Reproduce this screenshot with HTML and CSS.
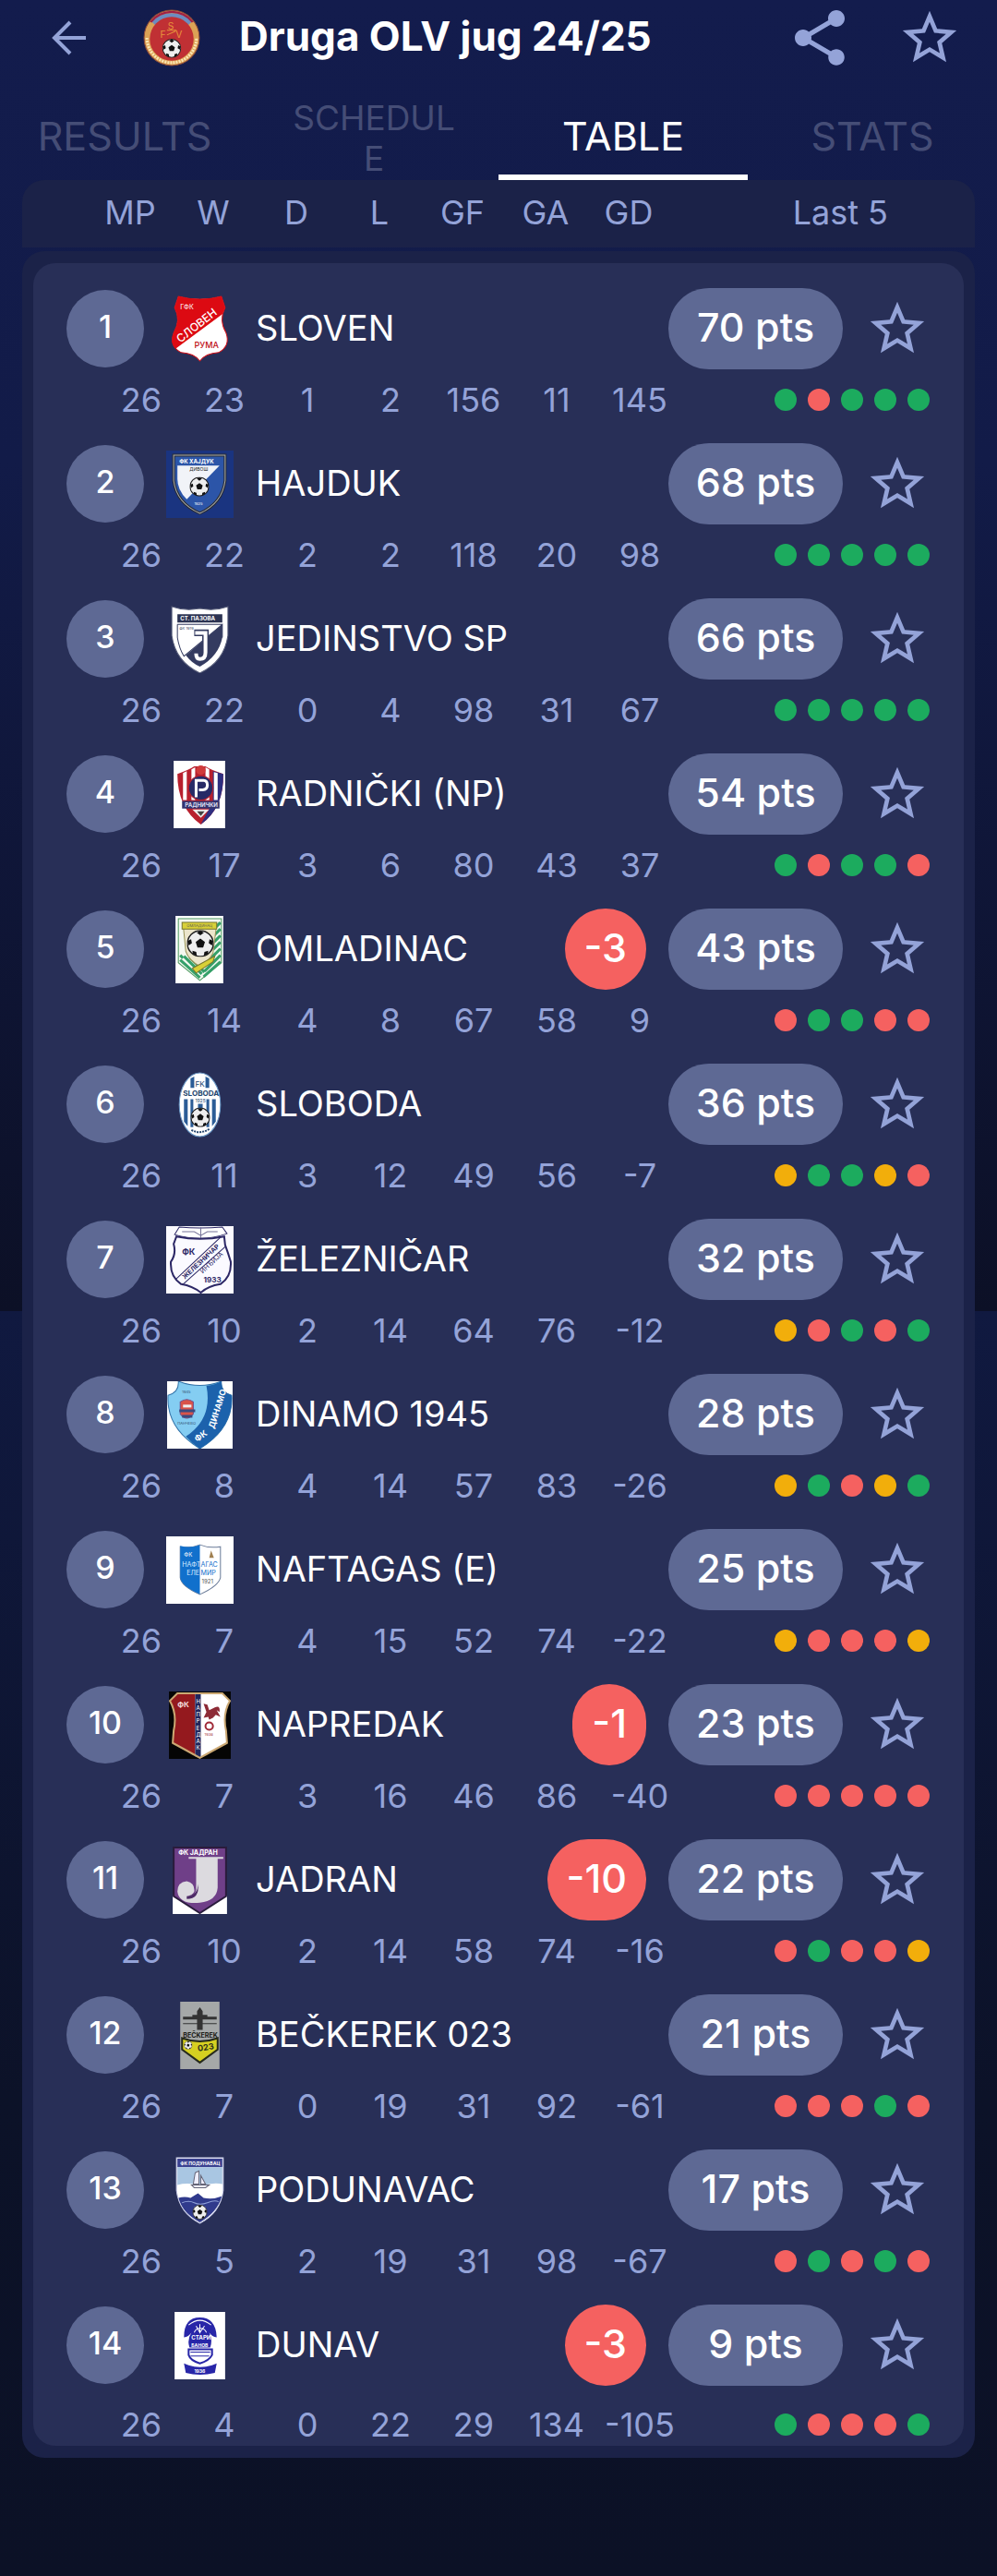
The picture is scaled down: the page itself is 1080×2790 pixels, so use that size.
FILE: index.html
```html
<!DOCTYPE html>
<html lang="en">
<head>
    <meta charset="UTF-8">
    <meta name="viewport" content="width=device-width, initial-scale=1.0">
    <title>Druga OLV jug 24/25 - Table</title>
    <link rel="stylesheet" href="styles.css">
</head>
<body>
    <!-- shared icons -->
    <svg class="sprite" aria-hidden="true">
        <symbol id="star" viewBox="0 0 24 24">
            <path d="M22 9.24l-7.19-.62L12 2 9.19 8.63 2 9.24l5.46 4.73L5.82 21 12 17.27 18.18 21l-1.63-7.03L22 9.24zM12 15.4l-3.76 2.27 1-4.28-3.32-2.88 4.38-.38L12 6.1l1.71 4.04 4.38.38-3.32 2.88 1 4.28L12 15.4z"/>
        </symbol>
        <symbol id="ball" viewBox="0 0 20 20">
            <circle cx="10" cy="10" r="9.5" fill="#eee" stroke="#222" stroke-width="1"/>
            <path fill="#111" d="M10 6.4l3.4 2.5-1.3 4H7.9l-1.3-4zM10 .5l2.6 1.6L10 4 7.4 2.1zM19.3 8l-.7 3.4-2.4-1.6.6-3zM.7 8l.7 3.4 2.4-1.6-.6-3zM15.6 17.5l-3 1.6.4-2.9 2.8-.9zM4.4 17.5l3 1.6-.4-2.9-2.8-.9z"/>
        </symbol>
    </svg>

    <header>
        <button class="back" aria-label="Back">
            <svg viewBox="0 0 40 40"><path d="M38 20H4M21 3L4 20l17 17" fill="none" stroke="#94a3d8" stroke-width="4"/></svg>
        </button>
        <svg class="league-logo" viewBox="0 0 60 60">
            <circle cx="30" cy="30" r="29" fill="#dca255" stroke="#8d4a3a" stroke-width="1"/>
            <path d="M9 13A29 29 0 0 1 51 13L47 17A24 24 0 0 0 13 17Z" fill="#6c8cc0"/>
            <path d="M7 13A29 29 0 0 1 53 13L51 14A27 27 0 0 0 9 14Z" fill="#a02045"/>
            <path d="M13 18A23 23 0 0 1 47 18L44 21A20 20 0 0 0 16 21Z" fill="#fff"/>
            <circle cx="30" cy="31" r="23" fill="#c03034"/>
            <path d="M4 30A26 26 0 0 0 56 30" fill="none" stroke="#fbe6b4" stroke-width="3" stroke-dasharray="2 1"/>
            <text x="18" y="30" font-size="10" fill="#e8953c">F</text>
            <text x="26" y="21" font-size="10" fill="#e8953c">S</text>
            <text x="34" y="30" font-size="10" fill="#e8953c">V</text>
            <path d="M25 22H35M25 27L34 23" stroke="#e8953c" stroke-width="1"/>
            <use href="#ball" x="20" y="31" width="20" height="20"/>
        </svg>
        <h1>Druga OLV jug 24/25</h1>
        <button class="share" aria-label="Share">
            <svg viewBox="0 0 24 24"><path d="M18 16.08c-.76 0-1.44.3-1.96.77L8.91 12.7c.05-.23.09-.46.09-.7s-.04-.47-.09-.7l7.05-4.11c.54.5 1.25.81 2.04.81 1.66 0 3-1.34 3-3s-1.34-3-3-3-3 1.34-3 3c0 .24.04.47.09.7L8.04 9.81C7.5 9.31 6.79 9 6 9c-1.66 0-3 1.34-3 3s1.34 3 3 3c.79 0 1.5-.31 2.04-.81l7.12 4.16c-.05.21-.08.43-.08.65 0 1.61 1.31 2.92 2.92 2.92s2.92-1.31 2.92-2.92-1.31-2.92-2.92-2.92z"/></svg>
        </button>
        <button class="fav" aria-label="Follow league"><svg><use href="#star"/></svg></button>
    </header>

    <nav>
        <a href="#results">RESULTS</a>
        <a href="#schedule" class="long">SCHEDULE</a>
        <a href="#table" class="active">TABLE</a>
        <a href="#stats">STATS</a>
    </nav>

    <table>
        <thead>
            <tr>
                <th class="team-head">Team</th>
                <th>MP</th><th>W</th><th>D</th><th>L</th><th>GF</th><th>GA</th><th>GD</th>
                <th class="last">Last 5</th>
            </tr>
        </thead>
        <tbody>
            <tr>
                <th class="team" scope="row">
                    <span class="rank">1</span>
                    <svg class="crest" viewBox="0 0 72 72">
                        <path d="M13 1Q36 7 59 1L63 13Q56 26 64 40Q69 54 56 61Q42 62 36 70Q30 62 16 61Q3 54 8 40Q16 26 9 13Z" fill="#fff" stroke="#d01018" stroke-width="1"/>
                        <path d="M13 1Q36 7 59 1L63 13L60 20L10 57Q3 50 8 40Q16 26 9 13Z" fill="#dc0a12"/>
                        <text x="15" y="15" font-size="7" fill="#fff">ГФК</text>
                        <text x="15" y="51" font-size="12" font-weight="500" fill="#fff" transform="rotate(-38 15 51)">СЛОВЕН</text>
                        <text x="30" y="56" font-size="9" font-weight="500" fill="#c01018">РУМА</text>
                    </svg>
                    <span class="name">SLOVEN</span>
                    <span class="points">70 pts</span>
                    <button class="fav" aria-label="Follow SLOVEN"><svg><use href="#star"/></svg></button>
                </th>
                <td>26</td><td>23</td><td>1</td><td>2</td><td>156</td><td>11</td><td>145</td>
                <td class="form"><i class="win"></i><i class="loss"></i><i class="win"></i><i class="win"></i><i class="win"></i></td>
            </tr>
            <tr>
                <th class="team" scope="row">
                    <span class="rank">2</span>
                    <svg class="crest" viewBox="0 0 72 72">
                        <rect width="72" height="72" fill="#1a3480"/>
                        <path d="M8 5H63V32Q60 56 36 67Q11 56 8 32Z" fill="#2c55a8" stroke="#2a2c30" stroke-width="3"/>
                        <path d="M8 5H63V32Q60 56 36 67Q11 56 8 32Z" fill="none" stroke="#a9adb3" stroke-width="1"/>
                        <path d="M12 16H57L22 52Q12 42 12 30Z" fill="#f1f3f8"/>
                        <text x="14" y="14" font-size="6" font-weight="bold" fill="#fff">ФК ХАЈДУК</text>
                        <text x="25" y="22" font-size="5" fill="#222">ДИВОШ</text>
                        <use href="#ball" x="25" y="28" width="21" height="21"/>
                        <text x="30" y="58" font-size="4" fill="#fff">1925</text>
                    </svg>
                    <span class="name">HAJDUK</span>
                    <span class="points">68 pts</span>
                    <button class="fav" aria-label="Follow HAJDUK"><svg><use href="#star"/></svg></button>
                </th>
                <td>26</td><td>22</td><td>2</td><td>2</td><td>118</td><td>20</td><td>98</td>
                <td class="form"><i class="win"></i><i class="win"></i><i class="win"></i><i class="win"></i><i class="win"></i></td>
            </tr>
            <tr>
                <th class="team" scope="row">
                    <span class="rank">3</span>
                    <svg class="crest" viewBox="0 0 72 72">
                        <path d="M6 1Q20 6 36 3Q52 6 66 1V32Q62 60 36 72Q10 60 6 32Z" fill="#fff" stroke="#555b78" stroke-width="1"/>
                        <path d="M12 9H60V18H12Z" fill="#2c3352"/>
                        <path d="M60 20V34Q56 54 36 65Q28 62 21 53Z" fill="#343b60"/>
                        <path d="M12 20H60M12 20V34Q14 46 19 54L60 20V34" fill="none" stroke="#343b60" stroke-width="1"/>
                        <text x="15" y="16" font-size="6" font-weight="bold" fill="#fff">СТ. ПАЗОВА</text>
                        <text x="14" y="26" font-size="4" fill="#343b60">ФК 1919</text>
                        <path d="M30 29H42V50Q42 57 36 57Q32 57 32 51" fill="none" stroke="#343b60" stroke-width="7"/>
                        <path d="M31 29H42V50Q42 57 36 57Q32 57 32 51" fill="none" stroke="#fff" stroke-width="4"/>
                    </svg>
                    <span class="name">JEDINSTVO SP</span>
                    <span class="points">66 pts</span>
                    <button class="fav" aria-label="Follow JEDINSTVO SP"><svg><use href="#star"/></svg></button>
                </th>
                <td>26</td><td>22</td><td>0</td><td>4</td><td>98</td><td>31</td><td>67</td>
                <td class="form"><i class="win"></i><i class="win"></i><i class="win"></i><i class="win"></i><i class="win"></i></td>
            </tr>
            <tr>
                <th class="team" scope="row">
                    <span class="rank">4</span>
                    <svg class="crest" viewBox="0 0 72 72">
                        <rect x="8" width="55" height="72" fill="#fff"/>
                        <path d="M12 14Q24 10 30 6H42Q48 10 61 14Q62 50 37 68Q12 50 12 14Z" fill="#b8202e"/>
                        <path d="M61 14Q62 50 37 68L50 44V11Z" fill="#2e2f80"/>
                        <path d="M18 13V42H22V11ZM27 9V42H31V7ZM42 7V42H46V9ZM51 12V42H55V13Z" fill="#fff"/>
                        <circle cx="37" cy="29" r="13" fill="#272a66" stroke="#b8202e" stroke-width="1"/>
                        <circle cx="37" cy="10" r="5" fill="#d03a3a"/>
                        <path d="M32 39V21H40Q44 21 44 26T39 31H35" fill="none" stroke="#fff" stroke-width="3"/>
                        <rect x="17" y="43" width="40" height="8" fill="#34346e"/>
                        <text x="20" y="49" font-size="6" font-weight="bold" fill="#dde">РАДНИЧКИ</text>
                        <path d="M28 52H46L37 61Z" fill="#eee"/>
                        <path d="M33 54H41L37 59Z" fill="#444"/>
                    </svg>
                    <span class="name">RADNIČKI (NP)</span>
                    <span class="points">54 pts</span>
                    <button class="fav" aria-label="Follow RADNIČKI (NP)"><svg><use href="#star"/></svg></button>
                </th>
                <td>26</td><td>17</td><td>3</td><td>6</td><td>80</td><td>43</td><td>37</td>
                <td class="form"><i class="win"></i><i class="loss"></i><i class="win"></i><i class="win"></i><i class="loss"></i></td>
            </tr>
            <tr>
                <th class="team" scope="row">
                    <span class="rank">5</span>
                    <svg class="crest" viewBox="0 0 72 72">
                        <rect x="10" width="51" height="72" fill="#fff"/>
                        <path d="M13 3H59V50L36 69L13 50Z" fill="#f4f8f0" stroke="#4d9a60" stroke-width="1"/>
                        <path d="M58 7L52 13M58 14L51 21M58 21L51 28M58 28L50 36M58 35L47 46M58 42L41 59M58 49L40 65M15 42L18 45M15 47L36 66M19 43L38 62M25 44L41 60" stroke="#35a06a" stroke-width="3"/>
                        <path d="M18 8H54L50 40Q46 48 36 54Q24 47 21 38Z" fill="#ece6cc" stroke="#9a9458" stroke-width="1"/>
                        <path d="M17 7H54V14H17ZM28 56L52 43L50 49L32 61Z" fill="#d8d038" stroke="#77742c" stroke-width="1"/>
                        <text x="22" y="12" font-size="4" fill="#555">ОМЛАДИНАЦ</text>
                        <use href="#ball" x="22" y="15" width="29" height="29"/>
                    </svg>
                    <span class="name">OMLADINAC</span>
                    <span class="deduction">-3</span>
                    <span class="points">43 pts</span>
                    <button class="fav" aria-label="Follow OMLADINAC"><svg><use href="#star"/></svg></button>
                </th>
                <td>26</td><td>14</td><td>4</td><td>8</td><td>67</td><td>58</td><td>9</td>
                <td class="form"><i class="loss"></i><i class="win"></i><i class="win"></i><i class="loss"></i><i class="loss"></i></td>
            </tr>
            <tr>
                <th class="team" scope="row">
                    <span class="rank">6</span>
                    <svg class="crest" viewBox="0 0 72 72">
                        <ellipse cx="36" cy="36" rx="22" ry="34" fill="#fff" stroke="#6c9ac8" stroke-width="1"/>
                        <path d="M26 8V18H30V6ZM42 6V18H46V8ZM19 30V54L23 59V30ZM26 30V60H29V30ZM43 30V60H46V30ZM49 30V59L53 54V30ZM34 35H39V42H34Z" fill="#2b5c96"/>
                        <text x="31" y="17" font-size="8" fill="#24466e">FK</text>
                        <text x="18" y="27" font-size="8" font-weight="bold" fill="#24466e">SLOBODA</text>
                        <text x="31" y="34" font-size="5" fill="#24466e">1925</text>
                        <use href="#ball" x="26" y="39" width="21" height="21"/>
                        <path d="M27 63Q36 68 46 62" fill="none" stroke="#24466e" stroke-width="2" stroke-dasharray="2 1"/>
                    </svg>
                    <span class="name">SLOBODA</span>
                    <span class="points">36 pts</span>
                    <button class="fav" aria-label="Follow SLOBODA"><svg><use href="#star"/></svg></button>
                </th>
                <td>26</td><td>11</td><td>3</td><td>12</td><td>49</td><td>56</td><td>-7</td>
                <td class="form"><i class="draw"></i><i class="win"></i><i class="win"></i><i class="draw"></i><i class="loss"></i></td>
            </tr>
            <tr>
                <th class="team" scope="row">
                    <span class="rank">7</span>
                    <svg class="crest" viewBox="0 0 72 72">
                        <rect width="72" height="72" fill="#fbfaff"/>
                        <path d="M14 1Q36 3 60 1L65 8Q50 13 37 13Q22 13 9 9Z" fill="#fff" stroke="#2d2866" stroke-width="1"/>
                        <path d="M17 6H30L37 10L44 6H55M37 1V13" fill="none" stroke="#77749a" stroke-width="1"/>
                        <path d="M11 11Q36 16 62 11L63 20Q66 28 69 38Q70 54 58 62Q45 64 37 71Q28 64 16 62Q4 54 5 38Q11 30 8 19Z" fill="none" stroke="#2d2866" stroke-width="2"/>
                        <path d="M10 57L58 12M17 63L63 22" stroke="#2d2866" stroke-width="1"/>
                        <text x="17" y="31" font-size="9" font-weight="bold" fill="#2d2866">ФК</text>
                        <text x="20" y="57" font-size="7" font-weight="bold" fill="#2d2866" transform="rotate(-43 20 57)">ЖЕЛЕЗНИЧАР</text>
                        <text x="39" y="51" font-size="7" fill="#2d2866" transform="rotate(-43 39 51)">ИНЂИЈА</text>
                        <text x="40" y="60" font-size="8" font-weight="bold" fill="#2d2866">1933</text>
                    </svg>
                    <span class="name">ŽELEZNIČAR</span>
                    <span class="points">32 pts</span>
                    <button class="fav" aria-label="Follow ŽELEZNIČAR"><svg><use href="#star"/></svg></button>
                </th>
                <td>26</td><td>10</td><td>2</td><td>14</td><td>64</td><td>76</td><td>-12</td>
                <td class="form"><i class="draw"></i><i class="loss"></i><i class="win"></i><i class="loss"></i><i class="win"></i></td>
            </tr>
            <tr>
                <th class="team" scope="row">
                    <span class="rank">8</span>
                    <svg class="crest" viewBox="0 0 72 72">
                        <rect x="1" width="70" height="72" fill="#fff"/>
                        <path d="M13 0Q14 12 2 15Q0 50 36 72Q72 50 70 15Q58 12 59 0Q36 9 13 0Z" fill="#84cdf2" stroke="#3272a8" stroke-width="1"/>
                        <path d="M43 5Q52 4 59 0Q58 12 70 15Q72 50 36 72Q28 67 21 59Q50 40 43 5Z" fill="#1c62ac"/>
                        <path d="M15 22Q22 17 29 22V35Q22 44 15 35Z" fill="#d9534a" stroke="#74508a" stroke-width="1"/>
                        <path d="M14 30H31V33H14ZM17 36H28V39H17Z" fill="#3a4a80"/>
                        <path d="M18 25H27V28H18Z" fill="#eee"/>
                        <text x="17" y="13" font-size="4" fill="#34506e">1945</text>
                        <text x="12" y="46" font-size="4" fill="#34506e">ПАНЧЕВО</text>
                        <text x="33" y="65" font-size="9" font-weight="bold" fill="#fff" transform="rotate(-35 33 65)">ФК</text>
                        <text x="51" y="51" font-size="9" font-weight="bold" fill="#fff" transform="rotate(-72 51 51)">ДИНАМО</text>
                    </svg>
                    <span class="name">DINAMO 1945</span>
                    <span class="points">28 pts</span>
                    <button class="fav" aria-label="Follow DINAMO 1945"><svg><use href="#star"/></svg></button>
                </th>
                <td>26</td><td>8</td><td>4</td><td>14</td><td>57</td><td>83</td><td>-26</td>
                <td class="form"><i class="draw"></i><i class="win"></i><i class="loss"></i><i class="draw"></i><i class="win"></i></td>
            </tr>
            <tr>
                <th class="team" scope="row">
                    <span class="rank">9</span>
                    <svg class="crest" viewBox="0 0 72 72">
                        <rect width="72" height="72" fill="#fff"/>
                        <path d="M15 11Q26 13 36 9Q46 13 58 11V44Q56 53 36 62Q16 53 15 44Z" fill="#fff" stroke="#6b7c99" stroke-width="1"/>
                        <path d="M15 10Q26 13 36 9V62Q16 53 15 44Z" fill="#1170cc"/>
                        <text x="19" y="22" font-size="6" fill="#fff">ФК</text>
                        <path d="M48 15L51 23H46Z" fill="#a08050"/>
                        <text x="17" y="33" font-size="7" fill="#d6eaff">НАФТ</text>
                        <text x="37" y="33" font-size="7" fill="#1170cc">АГАС</text>
                        <text x="22" y="41" font-size="7" fill="#d6eaff">ЕЛЕ</text>
                        <text x="37" y="41" font-size="7" fill="#1170cc">МИР</text>
                        <text x="38" y="50" font-size="6" fill="#555">1921</text>
                    </svg>
                    <span class="name">NAFTAGAS (E)</span>
                    <span class="points">25 pts</span>
                    <button class="fav" aria-label="Follow NAFTAGAS (E)"><svg><use href="#star"/></svg></button>
                </th>
                <td>26</td><td>7</td><td>4</td><td>15</td><td>52</td><td>74</td><td>-22</td>
                <td class="form"><i class="draw"></i><i class="loss"></i><i class="loss"></i><i class="loss"></i><i class="draw"></i></td>
            </tr>
            <tr>
                <th class="team" scope="row">
                    <span class="rank">10</span>
                    <svg class="crest" viewBox="0 0 72 72">
                        <rect x="3" width="66" height="72" fill="#050505"/>
                        <path d="M12 2H60L68 10Q60 24 64 42L65 55Q52 62 36 71Q20 62 7 55L8 42Q12 24 4 10Z" fill="#fff"/>
                        <path d="M12 2H31V68L7 55L8 42Q12 24 4 10Z" fill="#94191e"/>
                        <rect x="31" y="2" width="6" height="68" fill="#20275e"/>
                        <path d="M12 2H60L68 10Q60 24 64 42L65 55Q52 62 36 71Q20 62 7 55L8 42Q12 24 4 10Z" fill="none" stroke="#cba873" stroke-width="2"/>
                        <text x="12" y="17" font-size="8" font-weight="bold" fill="#f0dada">ФК</text>
                        <text font-size="6" fill="#fff"><tspan x="32" y="13">Н</tspan><tspan x="32" y="20">А</tspan><tspan x="32" y="27">П</tspan><tspan x="32" y="34">Р</tspan><tspan x="32" y="41">Е</tspan><tspan x="32" y="48">Д</tspan><tspan x="32" y="55">А</tspan><tspan x="32" y="62">К</tspan></text>
                        <path d="M40 13L44 14L46 20L52 17Q58 14 57 22L54 20L58 27L53 25L50 28L46 30L45 27L40 28L43 22Z" fill="#8d2b36"/>
                        <circle cx="46" cy="37" r="4" fill="none" stroke="#a02a38" stroke-width="2"/>
                        <text x="41" y="47" font-size="4" fill="#a02a38">1938</text>
                    </svg>
                    <span class="name">NAPREDAK</span>
                    <span class="deduction">-1</span>
                    <span class="points">23 pts</span>
                    <button class="fav" aria-label="Follow NAPREDAK"><svg><use href="#star"/></svg></button>
                </th>
                <td>26</td><td>7</td><td>3</td><td>16</td><td>46</td><td>86</td><td>-40</td>
                <td class="form"><i class="loss"></i><i class="loss"></i><i class="loss"></i><i class="loss"></i><i class="loss"></i></td>
            </tr>
            <tr>
                <th class="team" scope="row">
                    <span class="rank">11</span>
                    <svg class="crest" viewBox="0 0 72 72">
                        <rect x="7" y="52" width="58" height="20" fill="#fff"/>
                        <path d="M8 1H64V53L36 71L8 53Z" fill="#6f3f88" stroke="#2a1c3c" stroke-width="2"/>
                        <text x="13" y="9" font-size="7" font-weight="bold" fill="#fff">ФК ЈАДРАН</text>
                        <path d="M24 11H61V13H55V44Q54 58 36 60Q14 62 12 48Q12 38 22 37Q31 39 30 48Q28 52 24 52Q31 53 32 46V13H24Z" fill="#dcdadf"/>
                        <path d="M22 53Q34 52 34 40Q36 56 22 56Z" fill="#4d2a66"/>
                    </svg>
                    <span class="name">JADRAN</span>
                    <span class="deduction">-10</span>
                    <span class="points">22 pts</span>
                    <button class="fav" aria-label="Follow JADRAN"><svg><use href="#star"/></svg></button>
                </th>
                <td>26</td><td>10</td><td>2</td><td>14</td><td>58</td><td>74</td><td>-16</td>
                <td class="form"><i class="loss"></i><i class="win"></i><i class="loss"></i><i class="loss"></i><i class="draw"></i></td>
            </tr>
            <tr>
                <th class="team" scope="row">
                    <span class="rank">12</span>
                    <svg class="crest" viewBox="0 0 72 72">
                        <rect x="15" width="42" height="72" fill="#a5a8a8"/>
                        <path d="M17 39Q36 46 55 39V51L36 65L17 51Z" fill="#d6d021" stroke="#262a1c" stroke-width="2"/>
                        <path d="M18 16H54V19H18ZM18 23H54V24H18ZM33 10L36 6L39 10V30H33ZM28 14H44V16H28Z" fill="#333"/>
                        <text x="18" y="38" font-size="7" font-weight="bold" fill="#1d2018">BEČKEREK</text>
                        <use href="#ball" x="19" y="42" width="9" height="9"/>
                        <text x="34" y="53" font-size="9" font-weight="bold" fill="#30321c" transform="rotate(-8 34 53)">023</text>
                    </svg>
                    <span class="name">BEČKEREK 023</span>
                    <span class="points">21 pts</span>
                    <button class="fav" aria-label="Follow BEČKEREK 023"><svg><use href="#star"/></svg></button>
                </th>
                <td>26</td><td>7</td><td>0</td><td>19</td><td>31</td><td>92</td><td>-61</td>
                <td class="form"><i class="loss"></i><i class="loss"></i><i class="loss"></i><i class="win"></i><i class="loss"></i></td>
            </tr>
            <tr>
                <th class="team" scope="row">
                    <span class="rank">13</span>
                    <svg class="crest" viewBox="0 0 72 72">
                        <path d="M11 1H61V36Q58 60 36 71Q14 60 11 36Z" fill="#fff"/>
                        <path d="M12 2H60V11H12Z" fill="#3a4190"/>
                        <path d="M12 11H60V29Q50 27 38 31Q24 27 12 30Z" fill="#a9c6e2"/>
                        <path d="M13 44Q20 42 26 44L34 39L40 44Q50 46 60 42Q54 60 36 70Q17 60 13 44Z" fill="#303a8c"/>
                        <path d="M11 1H61V36Q58 60 36 71Q14 60 11 36Z" fill="none" stroke="#c5c9e6" stroke-width="1"/>
                        <path d="M31 17L35 15V29H29ZM37 20L42 29H37ZM27 30H46L42 33H30Z" fill="#eef" stroke="#667" stroke-width="1"/>
                        <text x="15" y="9" font-size="5" font-weight="bold" fill="#fff">ФК ПОДУНАВАЦ</text>
                        <path d="M17 49Q24 46 30 49T44 49T56 48" fill="none" stroke="#8fa0d8" stroke-width="1"/>
                        <use href="#ball" x="28" y="51" width="16" height="16"/>
                    </svg>
                    <span class="name">PODUNAVAC</span>
                    <span class="points">17 pts</span>
                    <button class="fav" aria-label="Follow PODUNAVAC"><svg><use href="#star"/></svg></button>
                </th>
                <td>26</td><td>5</td><td>2</td><td>19</td><td>31</td><td>98</td><td>-67</td>
                <td class="form"><i class="loss"></i><i class="win"></i><i class="loss"></i><i class="win"></i><i class="loss"></i></td>
            </tr>
            <tr>
                <th class="team" scope="row">
                    <span class="rank">14</span>
                    <svg class="crest" viewBox="0 0 72 72">
                        <rect x="9" width="54" height="72" fill="#fff"/>
                        <path d="M19 27Q19 6 36 6Q53 6 54 27Q49 27 46 22Q50 30 47 38H25Q22 30 27 22Q24 27 19 27Z" fill="#2826a8"/>
                        <path d="M30 22A7 7 0 0 1 43 22M36 13V23M32 15L36 22L41 15M24 14Q36 4 48 14" fill="none" stroke="#fff" stroke-width="1"/>
                        <text x="27" y="30" font-size="6" font-weight="bold" fill="#fff">СТАРИ</text>
                        <text x="27" y="37" font-size="5" font-weight="bold" fill="#fff">БАНОВ</text>
                        <path d="M24 40H49V46Q46 52 36 55Q26 52 24 46Z" fill="#fff" stroke="#2826a8" stroke-width="2"/>
                        <path d="M26 43H47M26 47H46" stroke="#2826a8" stroke-width="1"/>
                        <path d="M19 55L24 57Q36 61 49 57L54 55L52 65Q36 69 21 65Z" fill="#2826a8"/>
                        <text x="30" y="65" font-size="5" font-weight="bold" fill="#fff">1936</text>
                    </svg>
                    <span class="name">DUNAV</span>
                    <span class="deduction">-3</span>
                    <span class="points">9 pts</span>
                    <button class="fav" aria-label="Follow DUNAV"><svg><use href="#star"/></svg></button>
                </th>
                <td>26</td><td>4</td><td>0</td><td>22</td><td>29</td><td>134</td><td>-105</td>
                <td class="form"><i class="win"></i><i class="loss"></i><i class="loss"></i><i class="loss"></i><i class="win"></i></td>
            </tr>
        </tbody>
    </table>
</body>
</html>
```
FILE: styles.css
```css
* {
    box-sizing: border-box;
}
body {
    margin: 0;
    min-height: 100vh;
    font-family: 'Inter', 'Open Sans', sans-serif;
    color: #fff;
    background: linear-gradient(#131c4d 0, #121b48 500px, #0c1026 1420px, #101940 1420px, #0c1228 2270px, #0c1126 2790px) #0c1126;
}
.sprite {
    position: absolute;
    width: 0;
    height: 0;
}
button {
    background: none;
    border: none;
    padding: 0;
    cursor: pointer;
    display: flex;
    flex: none;
}
button svg {
    fill: #94a3d8;
}

/* top bar */
header {
    display: flex;
    align-items: center;
    height: 82px;
    padding: 0 38px 0 55px;
}
.back svg {
    width: 40px;
    height: 40px;
}
.league-logo {
    width: 62px;
    height: 62px;
    margin: 0 42px 0 60px;
    flex: none;
}
h1 {
    flex: 1;
    margin: 0;
    font-size: 44px;
    line-height: 48px;
    padding-bottom: 4px;
    font-weight: 700;
    white-space: nowrap;
}
.share {
    margin-right: 48px;
}
.share svg {
    width: 72px;
    height: 72px;
}
.fav svg {
    width: 70px;
    height: 70px;
}

/* tabs */
nav {
    display: grid;
    grid-template-columns: repeat(4, 1fr);
    margin-top: 12px;
}
nav a {
    display: flex;
    align-items: center;
    justify-content: center;
    height: 101px;
    padding-top: 4px;
    color: #454d76;
    font-size: 43px;
    line-height: 44px;
    text-align: center;
    text-decoration: none;
}
nav a.long {
    padding: 10px 44px 0;
    font-size: 37px;
    overflow-wrap: anywhere;
}
nav a.active {
    color: #fff;
    box-shadow: inset 0 -6px #fff;
}

/* standings */
table, thead, tbody {
    display: block;
}
table {
    margin: 0 24px;
    font-size: 36px;
    line-height: 46px;
    color: #94a3d8;
}
th, td {
    padding: 0;
    font-weight: 400;
    text-align: center;
}
tr {
    display: grid;
    grid-template-columns: repeat(7, 90px) 1fr;
    align-items: center;
}
thead {
    background: #1b2248;
    border-radius: 24px 24px 0 0;
    margin-bottom: 4px;
}
thead tr {
    height: 73px;
    padding: 0 94px 4px 72px;
}
.team-head {
    display: none;
}
.last {
    text-align: right;
}
tbody {
    background: #1b2248;
    border-radius: 24px;
    padding: 13px 12px;
}
tbody tr {
    background: #282f57;
    padding: 0 37px 24px 72px;
    row-gap: 10px;
}
tbody tr:first-child {
    padding-top: 27px;
    border-radius: 24px 24px 0 0;
}
tbody tr:last-child {
    padding-bottom: 0;
    row-gap: 19px;
    border-radius: 0 0 24px 24px;
}
.team {
    grid-column: 1 / -1;
    display: flex;
    align-items: center;
    gap: 24px;
    height: 88px;
    margin-left: -36px;
    color: #fff;
}
.rank {
    width: 84px;
    height: 84px;
    flex: none;
    border-radius: 50%;
    background: #5e6994;
    font-size: 34px;
    line-height: 80px;
    font-weight: 500;
}
.crest {
    width: 73px;
    height: 73px;
    flex: none;
}
.name {
    flex: 1;
    padding-bottom: 3px;
    font-size: 38px;
    text-align: left;
    white-space: nowrap;
}
.points, .deduction {
    height: 88px;
    border-radius: 44px;
    background: #5e6994;
    font-size: 43px;
    line-height: 84px;
    font-weight: 500;
    white-space: nowrap;
}
.points {
    width: 189px;
}
.deduction {
    padding: 0 21px;
    background: #f56160;
}
.form {
    display: flex;
    justify-content: flex-end;
    gap: 12px;
}
.form i {
    width: 24px;
    height: 24px;
    border-radius: 50%;
}
.win {
    background: #1cab5e;
}
.draw {
    background: #f2ae0b;
}
.loss {
    background: #f56160;
}
```
